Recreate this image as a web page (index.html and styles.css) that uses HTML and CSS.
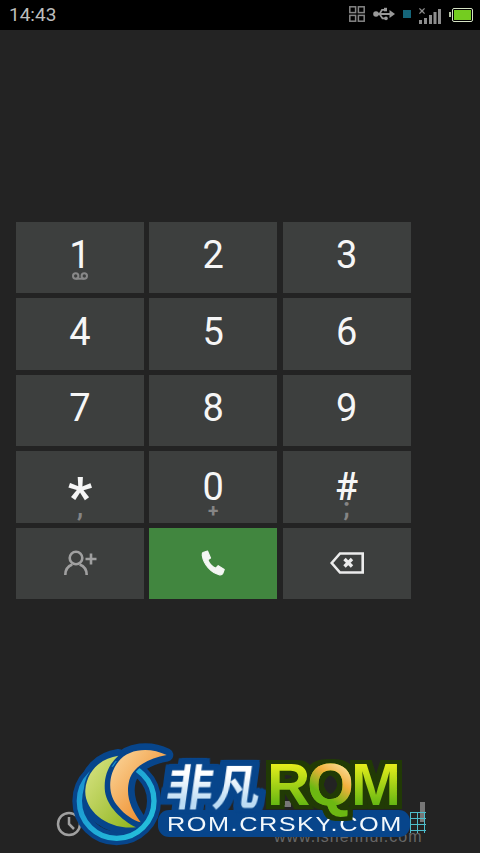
FILE: index.html
```html
<!DOCTYPE html>
<html lang="en">
<head>
    <meta charset="UTF-8">
    <meta name="viewport" content="width=device-width, initial-scale=1.0">
    <title>Dialer</title>
    <link rel="stylesheet" href="styles.css">
</head>
<body>

<!-- Status bar -->
<div class="status-bar">
    <span class="clock">14:43</span>
    <div class="status-icons">
        <svg width="16" height="16" viewBox="0 0 16 16" fill="none" stroke="#858585" stroke-width="1.500">
            <rect x=".8" y=".8" width="5.800" height="5.800"/><rect x="9.400" y=".8" width="5.800" height="5.800"/>
            <rect x=".8" y="9.400" width="5.800" height="5.800"/><rect x="9.400" y="9.400" width="5.800" height="5.800"/>
        </svg>
        <svg width="22" height="14" viewBox="0 0 22 14" fill="#999">
            <circle cx="3" cy="7" r="2.800"/><rect x="3" y="6" width="15" height="2"/>
            <path d="M16.500 3 22 7l-5.500 4z"/>
            <path d="M5.500 7 8.500 2h3.500v1.800H9.500L7.500 7zM7.500 7l2.500 3.500h2.500v1.800H9L5.500 7z"/>
            <rect x="11" y=".8" width="3" height="3.500"/><circle cx="13" cy="11.400" r="1.800"/>
        </svg>
        <span class="sim-square"></span>
        <svg class="signal" width="22" height="16" viewBox="0 0 22 16" fill="#8d8d8d">
            <path d="M0 .8.800 0 3 2 5.200 0 6 .8 4 3l2 2.200-.8.800L3 4 .8 6 0 5.200 2 3z"/>
            <rect x="0" y="12" width="3" height="4"/><rect x="5" y="10" width="3" height="6"/>
            <rect x="10" y="7" width="3" height="9"/><rect x="14.500" y="4" width="3" height="12"/>
            <rect x="19" y="1" width="3" height="15"/>
        </svg>
        <div class="battery"><span class="battery-fill"></span></div>
    </div>
</div>

<!-- Keypad -->
<div class="keypad">
    <div class="key"><span class="digit">1</span>
        <svg class="voicemail" width="16" height="8" viewBox="0 0 16 8" fill="none" stroke="#888" stroke-width="2">
            <circle cx="3.700" cy="4" r="2.700"/><circle cx="12.300" cy="4" r="2.700"/><path d="M3.700 6.700h8.600"/>
        </svg>
    </div>
    <div class="key"><span class="digit">2</span></div>
    <div class="key"><span class="digit">3</span></div>
    <div class="key"><span class="digit">4</span></div>
    <div class="key"><span class="digit">5</span></div>
    <div class="key"><span class="digit">6</span></div>
    <div class="key"><span class="digit">7</span></div>
    <div class="key"><span class="digit">8</span></div>
    <div class="key"><span class="digit">9</span></div>
    <div class="key"><span class="digit star">*</span><span class="sub-char punct">,</span></div>
    <div class="key"><span class="digit low">0</span><span class="sub-char">+</span></div>
    <div class="key"><span class="digit low hash">#</span><span class="sub-char punct">;</span></div>
    <div class="key">
        <svg width="34" height="26" viewBox="0 0 34 26" fill="none" stroke="#a0a0a0" stroke-width="2.600">
            <circle cx="13" cy="8" r="6.300"/>
            <path d="M2.300 25c0-5.500 3-9 7-10.500M23.700 25c0-5.500-3-9-7-10.500"/>
            <path d="M22.500 9h11M28 3.500v11"/>
        </svg>
    </div>
    <div class="key key-call">
        <svg width="26" height="26" viewBox="0 0 26 26" fill="#f4f6f3" stroke="#f4f6f3" stroke-width="1.200" stroke-linejoin="round">
            <path d="M3 2.500 7.500 1l3 7-2.700 1.800c1 3.200 4.500 7 8 8.400l2.400-2.500 6 3.800-1.500 4c-.5 1-1.500 1.500-3 1.300C11 23 3.500 14 2.300 5.500 2.200 4 2.300 3 3 2.500z"/>
        </svg>
    </div>
    <div class="key">
        <svg width="34" height="22" viewBox="0 0 34 22" fill="none" stroke="#ececec" stroke-width="2.600">
            <path d="M10 1.500H32.700v19H10L1.700 11z"/>
            <path d="M14.500 7l7.500 7.500M22 7l-7.500 7.500" stroke-width="3.400"/>
        </svg>
    </div>
</div>

<!-- Bottom tabs, mostly covered by the watermark -->
<svg class="tab-clock" width="26" height="26" viewBox="0 0 26 26" fill="none" stroke="#a0a0a0" stroke-width="2.500">
    <circle cx="13" cy="13" r="11"/><path d="M13 6v7l5 5"/>
</svg>
<div class="tab-stub"></div>
<div class="tab-bars"></div>
<div class="tab-grid"></div>
<div class="site-text">www.ishenhui.com</div>

<!-- Watermark logo -->
<div class="logo">
    <svg class="logo-mark" width="200" height="118" viewBox="0 0 600 354">
        <defs>
            <linearGradient id="orange" x1="0" y1="0" x2="1" y2="1">
                <stop offset="0" stop-color="#fbd9a0"/><stop offset=".6" stop-color="#f2a048"/><stop offset="1" stop-color="#e2700f"/>
            </linearGradient>
            <linearGradient id="lime" x1="0" y1="0" x2="1" y2="1">
                <stop offset="0" stop-color="#dbe587"/><stop offset="1" stop-color="#8eb41c"/>
            </linearGradient>
            <linearGradient id="ring" x1="0" y1="0" x2="1" y2="1">
                <stop offset="0" stop-color="#1a8fd0"/><stop offset="1" stop-color="#25c3dc"/>
            </linearGradient>
            <path id="crescent-o" d="M350 60C300 35 235 40 205 80 170 125 175 185 205 215 225 240 250 255 272 262 245 225 225 185 238 135 250 95 295 70 350 60Z"/>
            <path id="crescent-l" d="M205 62C150 70 110 110 106 165 102 225 170 285 258 277 215 255 172 215 165 170 160 125 175 90 205 62Z"/>
        </defs>
        <circle cx="200" cy="198" r="112" fill="none" stroke="#07458b" stroke-width="42"/>
        <use href="#crescent-o" fill="#07458b" stroke="#07458b" stroke-width="40" stroke-linejoin="round"/>
        <use href="#crescent-l" fill="#07458b" stroke="#07458b" stroke-width="40" stroke-linejoin="round"/>
        <circle cx="200" cy="198" r="112" fill="none" stroke="url(#ring)" stroke-width="16"/>
        <use href="#crescent-l" fill="#07458b" stroke="#07458b" stroke-width="10" stroke-linejoin="round"/>
        <use href="#crescent-o" fill="#07458b" stroke="#07458b" stroke-width="10" stroke-linejoin="round"/>
        <use href="#crescent-l" fill="url(#lime)"/>
        <use href="#crescent-o" fill="url(#orange)"/>
    </svg>
    <div class="logo-url"><span class="logo-url-text">ROM.CRSKY.COM</span></div>
    <div class="logo-cn">非凡</div>
    <div class="logo-rom">R<span class="logo-q">Q</span>M</div>
</div>

</body>
</html>
```

FILE: styles.css
```css
body {
    font-family: Roboto, 'Noto Sans', sans-serif;
    margin: 0;
    padding: 0;
    width: 480px;
    height: 853px;
    position: relative;
    overflow: hidden;
    color: #f6f6f6;
    background-color: #232323;
}

.status-bar {
    height: 30px;
    background-color: #000;
    display: flex;
    align-items: center;
    justify-content: space-between;
    padding: 0 7px 2px 9px;
    box-sizing: border-box;
}

.clock {
    font-size: 19px;
    color: #bdbdbd;
}

.status-icons {
    display: flex;
    align-items: center;
    gap: 8px;
}

.sim-square {
    width: 8px;
    height: 8px;
    background-color: #156579;
}

.signal {
    margin-top: 3px;
}

.battery {
    position: relative;
    width: 21px;
    height: 14px;
    margin-left: 3px;
    margin-top: 2px;
    border: 1.500px solid #d5e2c4;
    border-radius: 2px;
    padding: 1px;
    box-sizing: border-box;
    display: flex;
}

/* battery nib */
.battery::before {
    content: '';
    position: absolute;
    left: -4px;
    top: 3px;
    width: 2px;
    height: 5px;
    background-color: #b5c2a5;
}

.battery-fill {
    flex: 1;
    background-color: #74cc20;
}

.keypad {
    display: grid;
    grid-template-columns: repeat(3, 128px);
    grid-auto-rows: 71.400px;
    column-gap: 5.300px;
    row-gap: 5px;
    margin: 192px 0 0 16px;
}

.key {
    position: relative;
    background-color: #3d3f3e;
    display: flex;
    align-items: center;
    justify-content: center;
}

.key-call {
    background-color: #41863f;
}

.digit {
    font-size: 38px;
    line-height: 36px;
    margin-top: -5px;
}

.low {
    margin-top: 0;
}

.star {
    font-size: 54px;
    font-weight: 700;
    line-height: 12px;
    margin-top: 20px;
}

.hash {
    font-weight: 500;
}

.voicemail {
    position: absolute;
    left: 56px;
    top: 50px;
}

.sub-char {
    position: absolute;
    left: 0;
    right: 0;
    top: 54px;
    text-align: center;
    font-size: 19px;
    line-height: 12px;
    font-weight: 700;
    color: #858585;
}

.punct {
    font-size: 25px;
    top: 51px;
}

.tab-clock {
    position: absolute;
    left: 56px;
    top: 811px;
}

.tab-stub {
    position: absolute;
    left: 283px;
    top: 801px;
    width: 8px;
    height: 6px;
    background-color: #777;
}

.tab-bars {
    position: absolute;
    left: 420px;
    top: 802px;
    width: 5px;
    height: 20px;
    background-color: #777;
}

.tab-grid {
    position: absolute;
    left: 410px;
    top: 812px;
    width: 16px;
    height: 21px;
    background-image: repeating-linear-gradient(#4dbdcb 0 1px, transparent 1px 6px), repeating-linear-gradient(90deg, #4dbdcb 0 1px, transparent 1px 7px);
}

.site-text {
    position: absolute;
    left: 274px;
    top: 828px;
    font-family: 'Liberation Sans', sans-serif;
    font-size: 16px;
    letter-spacing: 1px;
    color: #666;
}

.logo {
    position: absolute;
    left: 50px;
    top: 735px;
    width: 370px;
    height: 118px;
}

.logo-mark {
    position: absolute;
    left: 0;
    top: 0;
}

.logo-url {
    position: absolute;
    left: 108px;
    top: 75px;
    width: 252px;
    height: 27px;
    background-color: #07458b;
    border-radius: 11px;
    display: flex;
    align-items: center;
}

.logo-url-text {
    margin-left: 9px;
    font-family: 'Liberation Sans', sans-serif;
    font-size: 20px;
    line-height: 20px;
    letter-spacing: 1.200px;
    color: #f2f8fc;
    white-space: nowrap;
    transform: scaleX(1.265);
    transform-origin: left center;
}

.logo-cn {
    position: absolute;
    left: 117px;
    top: 22px;
    font-family: 'Noto Sans CJK SC', sans-serif;
    font-size: 47px;
    line-height: 56px;
    font-weight: 700;
    white-space: nowrap;
    background-image: linear-gradient(#ffffff 30%, #bcdcf4 80%);
    -webkit-background-clip: text;
    background-clip: text;
    color: transparent;
    transform: skewX(-8deg);
    filter: drop-shadow(4px 0 0 #07458b) drop-shadow(-4px 0 0 #07458b) drop-shadow(0 4px 0 #07458b) drop-shadow(0 -4px 0 #07458b) drop-shadow(3px 0 0 #07458b) drop-shadow(-3px 0 0 #07458b) drop-shadow(0 2px 0 #07458b) drop-shadow(0 -2px 0 #07458b);
}

.logo-rom {
    position: absolute;
    left: 217px;
    top: 20px;
    font-family: 'Liberation Sans', sans-serif;
    font-size: 60px;
    line-height: 60px;
    font-weight: 700;
    letter-spacing: -3px;
    white-space: nowrap;
    background-image: linear-gradient(#eef21c 10%, #62b512 85%);
    -webkit-background-clip: text;
    background-clip: text;
    color: transparent;
    filter: drop-shadow(5px 0 0 #213a05) drop-shadow(-5px 0 0 #213a05) drop-shadow(0 4px 0 #213a05) drop-shadow(0 -4px 0 #213a05);
}

.logo-q {
    background-image: linear-gradient(35deg, #6cb812 35%, #f2b03c 60%, #fbe3a8 85%);
    -webkit-background-clip: text;
    background-clip: text;
    color: transparent;
}
```
